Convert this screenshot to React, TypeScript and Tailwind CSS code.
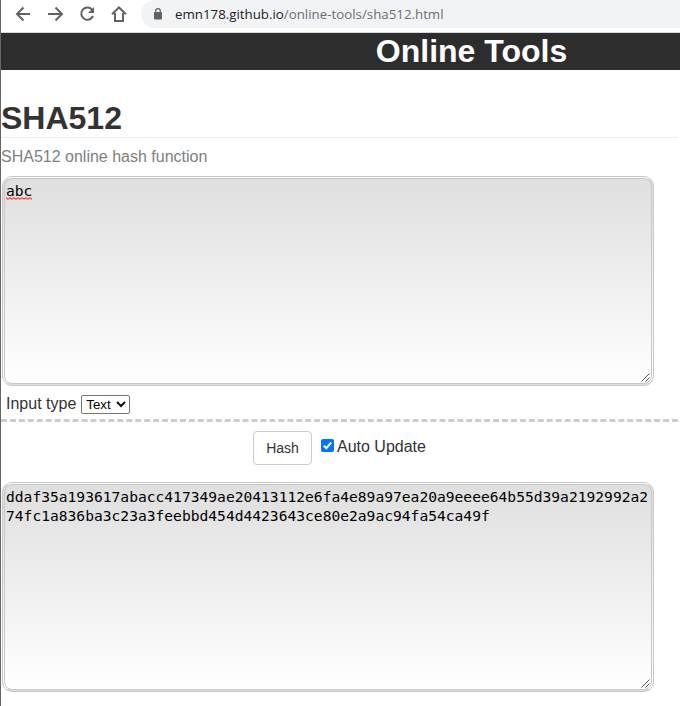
import React from "react";

function Grip() {
  return (
    <svg className="absolute right-0 bottom-0 h-[11px] w-[11px]" viewBox="0 0 11 11" stroke="#555" strokeWidth="1" fill="none">
      <path d="M1.500 9.500 9.500 1.500M5.500 9.500 9.500 5.500" />
    </svg>
  );
}

function Area({ children }: { children: React.ReactNode }) {
  return (
    <div className="relative ml-px h-[210px] w-[652px] rounded-[10px] border-[3px] border-double border-[#c8c8c8] bg-linear-to-b from-[#dfdfdf] to-white px-px pt-[2px] font-['DejaVu_Sans_Mono',monospace] text-[14.62px] leading-[19px] break-all text-black">
      {children}
      <Grip />
    </div>
  );
}

function Toolbar() {
  return (
    <div className="flex h-8 w-full items-start bg-white">
      <svg className="h-7 w-[140px] shrink-0" viewBox="0 0 140 28" fill="none" stroke="#5f6368" strokeWidth="2">
        <path d="M29 14H16.500M22.500 7.500 16 14l6.500 6.500" />
        <path d="M47 14h13.500M54.500 7.500 61 14l-6.500 6.500" />
        <path d="M91.300 10A6.100 6.100 0 1 0 92 16" />
        <path d="M93 7v6h-6z" fill="#5f6368" stroke="none" />
        <path d="M111 14.200 118 7.500l7 6.700M114 13v8h8v-8" />
      </svg>
      <div className="flex h-7 flex-1 items-center rounded-l-full bg-[#f1f3f4] pl-[13px]">
        <svg className="h-3 w-2 shrink-0" viewBox="0 0 8 12" fill="none">
          <path d="M1.700 5V3a2.300 2.300 0 0 1 4.600 0v2" stroke="#5f6368" strokeWidth="1.200" />
          <rect y="4" width="8" height="7.500" rx="1" fill="#5f6368" />
        </svg>
        <span className="ml-[13px] font-['Open_Sans',sans-serif] text-[13.300px] leading-7 whitespace-nowrap text-[#6b6f74]">
          <span className="text-[#202124]">emn178.github.io</span>/online-tools/sha512.html
        </span>
      </div>
    </div>
  );
}

export default function App() {
  return (
    <div className="h-[706px] w-[680px] overflow-hidden border-l border-[#666] bg-white font-['Liberation_Sans',Arial,sans-serif] text-[16px] text-[#333]">
      <Toolbar />
      <div className="h-[38px] border-t border-[#d5d7da] bg-[#2d2d2d]">
        <div className="w-[941px] text-center text-[32px] leading-[37px] font-bold text-white">Online Tools</div>
      </div>
      <h1 className="mt-[29px] h-[39px] w-[677px] border-b border-[#eee] text-[32px] leading-[38px] font-bold">SHA512</h1>
      <p className="mt-[9px] h-[29px] leading-[19px] text-[#808080]">SHA512 online hash function</p>
      <Area>
        <span className="relative inline-block">
          abc
          <svg className="absolute bottom-0 left-0 h-[3px] w-[26px]" viewBox="0 0 26 3" fill="none" stroke="#f00" strokeWidth="1">
            <path d="m0 .7 2 1.600 2-1.600 2 1.600 2-1.600 2 1.600 2-1.600 2 1.600 2-1.600 2 1.600 2-1.600 2 1.600 2-1.600 2 1.600" />
          </svg>
        </span>
      </Area>
      <div className="flex h-[33px] items-center pt-1 pl-[5px]">
        <span className="-mt-0.5">Input type</span>
        <span className="ml-[5px] flex h-[19px] w-[49px] items-center rounded-[2px] border border-[#767676] bg-white pl-1 text-[13.333px] leading-[17px] text-black">
          Text
          <svg className="ml-[5px] h-[7px] w-[10px]" viewBox="0 0 10 7" fill="none" stroke="#111" strokeWidth="2">
            <path d="m1 1 4 4 4-4" />
          </svg>
        </span>
      </div>
      <div className="h-0 w-[677px] border-t-[3px] border-dashed border-[#d0cccc]" />
      <div className="mt-[9px] ml-[252px] flex h-[34px]">
        <button className="h-[34px] w-[59px] rounded-[4px] border border-[#ccc] bg-white text-[14px] leading-[20px]">Hash</button>
        <div className="ml-[9px] flex h-[30px] items-start pt-2">
          <svg className="h-[13px] w-[13px]" viewBox="0 0 13 13">
            <rect width="13" height="13" rx="2" fill="#0075ff" />
            <path d="m2.800 6.800 2.500 2.500 4.900-6" fill="none" stroke="#fff" strokeWidth="2" />
          </svg>
          <span className="-mt-px ml-[3px] leading-[18px]">Auto Update</span>
        </div>
      </div>
      <div className="mt-[17px]">
        <Area>ddaf35a193617abacc417349ae20413112e6fa4e89a97ea20a9eeee64b55d39a2192992a274fc1a836ba3c23a3feebbd454d4423643ce80e2a9ac94fa54ca49f</Area>
      </div>
    </div>
  );
}
